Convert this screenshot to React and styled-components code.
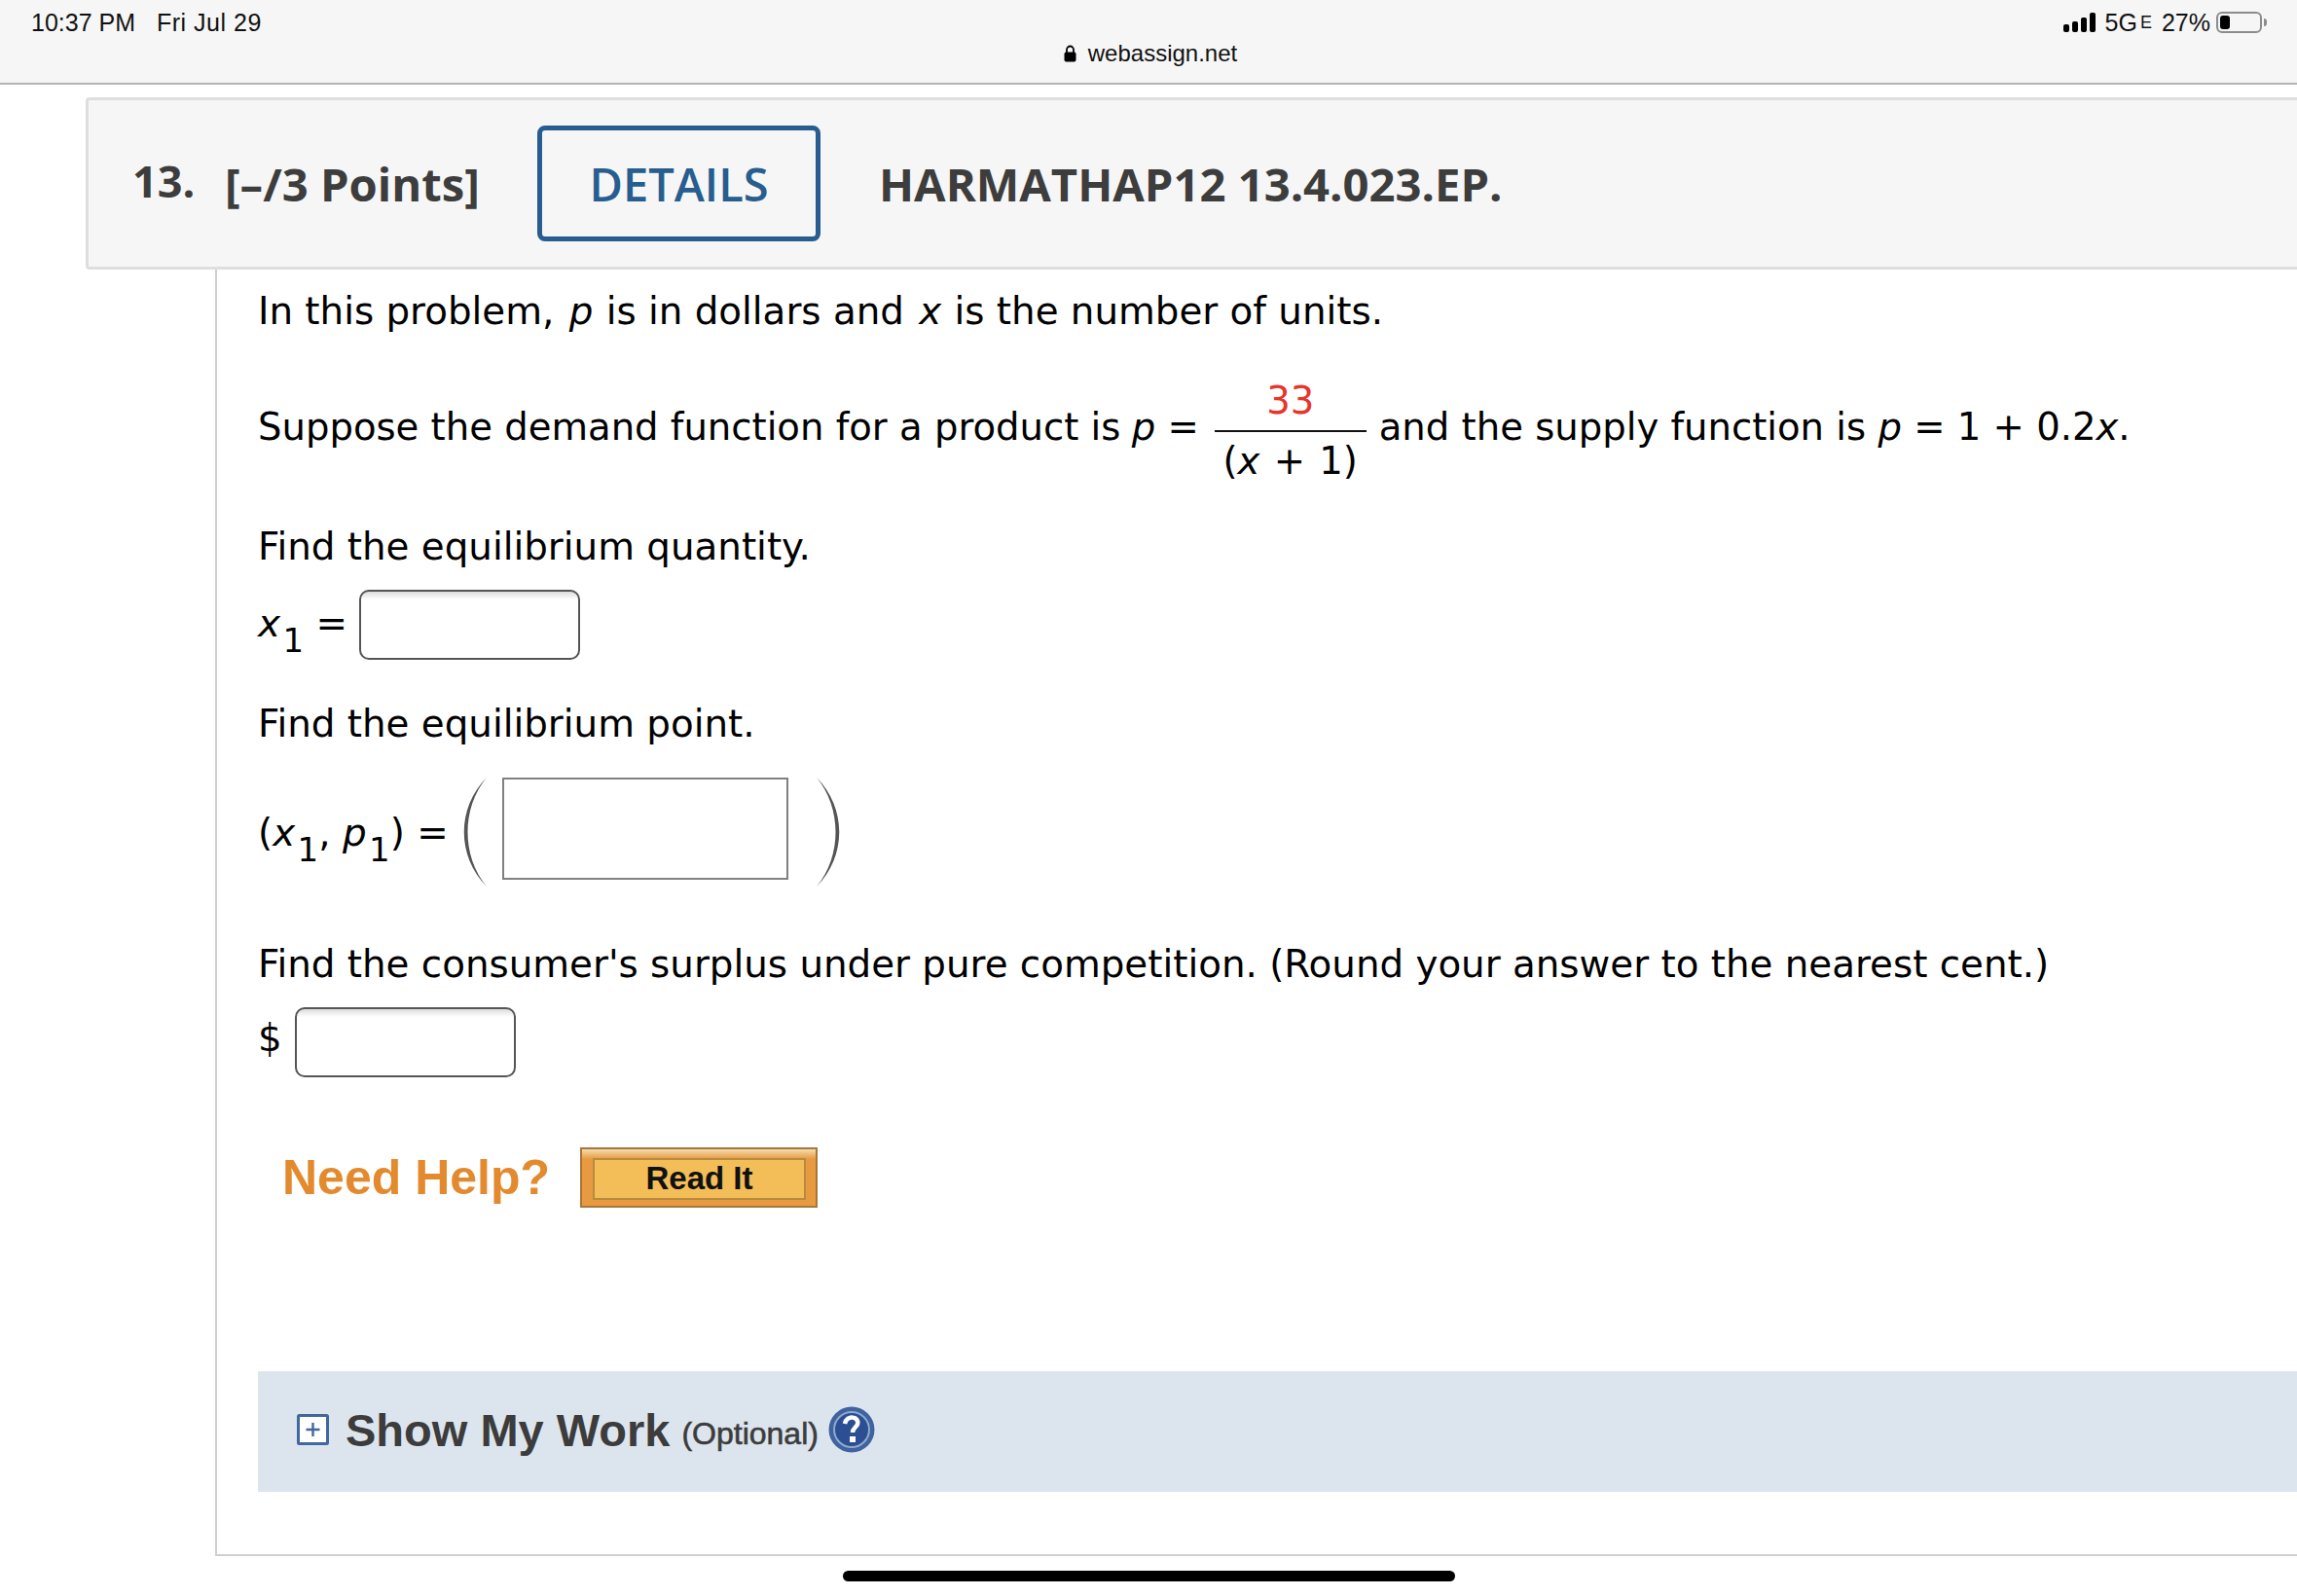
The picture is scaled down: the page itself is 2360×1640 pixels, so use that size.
import React from "react";
import styled, { createGlobalStyle } from "styled-components";

const Global = createGlobalStyle`
  html, body { margin: 0; padding: 0; background: #fff; }
  body { width: 2360px; height: 1640px; overflow: hidden; }
`;
const Page = styled.div`width:2360px;height:1640px;display:flex;flex-direction:column;overflow:hidden;background:#fff;color:#000;font-family:"DejaVu Sans",Verdana,sans-serif;`;
const StatusBar = styled.header`height:87px;box-sizing:border-box;flex:none;background:#f6f6f6;border-bottom:2px solid #b4b4b4;font-family:"Liberation Sans",Arial,sans-serif;font-size:25px;color:#111;`;
const TopRow = styled.div`height:46px;padding:0 36px 0 32px;display:flex;align-items:center;justify-content:space-between;`;
const Clock = styled.div`display:flex;gap:22px;`;
const DateText = styled.span`letter-spacing:.5px;`;
const Indicators = styled.div`display:flex;align-items:center;gap:9px;`;
const Signal = styled.div`display:flex;align-items:flex-end;gap:3px;height:20px;margin-right:1px;`;
const SignalBar = styled.span`width:6px;height:${p=>p.$h}px;background:#000;border-radius:2px;`;
const SmallE = styled.span`font-size:18px;margin-left:-6px;margin-right:1px;`;
const Battery = styled.div`position:relative;width:47px;height:22px;box-sizing:border-box;border:2px solid #8c8c8c;border-radius:6px;padding:2px;margin-left:-3px;`;
const BatteryFill = styled.div`width:10px;height:100%;background:#000;border-radius:3px;`;
const BatteryNub = styled.span`position:absolute;right:-7px;top:5px;width:3px;height:8px;background:#8c8c8c;border-radius:0 3px 3px 0;`;
const UrlRow = styled.div`display:flex;justify-content:center;align-items:center;gap:12px;height:20px;font-size:24px;margin-top:-1px;padding-left:4px;`;

const Content = styled.main`flex:1;padding:13px 0 0 88px;display:flex;flex-direction:column;`;
const QuestionHeader = styled.div`height:177px;flex:none;box-sizing:border-box;background:#f6f6f6;border:3px solid #dedede;border-right:none;border-radius:4px 0 0 4px;display:flex;align-items:center;padding-left:45px;color:#3d3d3d;font-family:"Open Sans",sans-serif;font-weight:700;`;
const Number = styled.span`font-size:45px;margin-top:-6px;width:95px;flex:none;`;
const Points = styled.span`font-size:47.2px;width:321px;flex:none;`;
const Details = styled.span`width:291px;height:119px;flex:none;box-sizing:border-box;border:5px solid #275d8f;border-radius:8px;color:#275d8f;font-weight:600;font-size:47px;display:flex;align-items:center;justify-content:center;margin-right:60px;`;
const Code = styled.span`font-size:47.2px;white-space:nowrap;`;

const Body = styled.section`margin-left:133px;height:1322px;flex:none;box-sizing:border-box;border-left:2px solid #cfcfcf;border-bottom:2px solid #cfcfcf;padding:21px 0 0 42px;font-size:38.8px;display:flex;flex-direction:column;`;
const Line = styled.div`height:44px;line-height:44px;flex:none;margin-top:${p=>p.$top||0}px;white-space:pre;`;
const I = styled.i`font-style:italic;`;
const SpacedI = styled.i`font-style:italic;margin:0 1px 0 3px;`;
const TightI = styled.i`font-style:italic;margin-left:-1px;`;
const FractionRow = styled.div`display:flex;align-items:center;height:108px;margin-top:48px;flex:none;white-space:pre;font-size:38.6px;`;
const Fraction = styled.span`display:inline-flex;flex-direction:column;align-items:center;width:156px;margin:0 13px 0 16px;`;
const Num = styled.span`color:#e8342a;line-height:44px;height:52px;`;
const Den = styled.span`border-top:2px solid #111;width:100%;text-align:center;line-height:60px;height:54px;word-spacing:2px;`;
const Tail = styled.span`display:block;margin-top:-12px;`;
const Row = styled.div`display:flex;align-items:center;flex:none;height:${p=>p.$h}px;margin-top:${p=>p.$top}px;white-space:pre;`;
const Label = styled.span`width:${p=>p.$w}px;flex:none;margin-top:${p=>p.$shift}px;`;
const Sub = styled.sub`font-size:34px;line-height:0;vertical-align:-16px;margin-left:2.5px;`;
const RoundInput = styled.div`width:227px;height:${p=>p.$h}px;box-sizing:border-box;border:2px solid #555;border-radius:10px;background:linear-gradient(#dcdcdc 0,#fff 8px);`;
const SquareInput = styled.div`width:294px;height:105px;box-sizing:border-box;border:2px solid #808080;background:#fff;margin:0 26px 0 11px;`;
const Paren = styled.svg`width:${p=>p.$w}px;height:114px;flex:none;margin-top:8px;`;
const HelpRow = styled.div`display:flex;align-items:center;height:62px;margin-top:72px;flex:none;padding-left:25px;font-family:"Liberation Sans",Arial,sans-serif;font-weight:700;`;
const NeedHelp = styled.span`color:#e38a2e;font-size:50px;width:306px;flex:none;`;
const ReadIt = styled.div`width:244px;height:62px;box-sizing:border-box;border:2px solid #a8763a;background:linear-gradient(#f4dcb0 0,#e89a40 10px);padding:9px 10px 6px 11px;display:flex;`;
const ReadItInner = styled.div`flex:1;border:2px solid #b78a3f;background:#f3bd58;color:#111;font-size:33px;line-height:1;padding-bottom:2px;display:flex;align-items:center;justify-content:center;`;
const WorkBar = styled.div`height:124px;box-sizing:border-box;padding:0 0 4px 40px;margin-top:168px;flex:none;background:#dce5ee;display:flex;align-items:center;color:#3c3c3c;font-family:"Liberation Sans",Arial,sans-serif;font-weight:700;`;
const WorkTitle = styled.span`font-size:47px;margin:0 12px 0 17px;`;
const Optional = styled.span`font-size:32px;margin:8px 10px 0 0;font-weight:400;-webkit-text-stroke:.6px #3c3c3c;`;
const Home = styled.div`position:absolute;left:866px;top:1614px;width:629px;height:11px;border-radius:6px;background:#000;`;

const Lock = () => (<svg width="13" height="18" viewBox="0 0 13 18"><path d="M3 8V5a3.5 3.5 0 0 1 7 0v3" fill="none" stroke="#000" strokeWidth="1.8"/><rect x="0.5" y="7.5" width="12" height="10" rx="2" fill="#000"/></svg>);
const Plus = () => (<svg width="33" height="32" viewBox="0 0 33 32"><rect x="1.5" y="1.5" width="30" height="29" rx="1" fill="#fff" stroke="#40689e" strokeWidth="3"/><path d="M16.5 9v14M9.5 16h14" stroke="#40689e" strokeWidth="2.4"/></svg>);
const Help = () => (<svg width="48" height="48" viewBox="0 0 48 48"><circle cx="24" cy="24" r="23.5" fill="#3f639f"/><circle cx="24" cy="24" r="18" fill="#2c4f93" stroke="#8fa9d0" strokeWidth="2"/><path d="M17 18c1-5 5-7 8-6.5 4 .5 6 3.5 5 7-1 3-5 4-5 8.5" fill="none" stroke="#fff" strokeWidth="4.5"/><rect x="22" y="31" width="6" height="6" fill="#fff"/></svg>);
const LeftParen = () => (<Paren $w={35} viewBox="0 0 35 114"><path d="M30 1C-1 32 -1 82 30 113C4 82 4 32 30 1Z" fill="#555"/></Paren>);
const RightParen = () => (<Paren $w={29} viewBox="0 0 29 114"><path d="M3 1C34 32 34 82 3 113C29 82 29 32 3 1Z" fill="#555"/></Paren>);

export default function App() {
  return (
    <Page>
      <Global />
      <StatusBar>
        <TopRow>
          <Clock><span>10:37 PM</span><DateText>Fri Jul 29</DateText></Clock>
          <Indicators>
            <Signal>
              <SignalBar $h={8}/><SignalBar $h={11}/><SignalBar $h={15}/><SignalBar $h={20}/>
            </Signal>
            <span>5G</span><SmallE>E</SmallE><span>27%</span>
            <Battery><BatteryFill/><BatteryNub/></Battery>
          </Indicators>
        </TopRow>
        <UrlRow><Lock/><span>webassign.net</span></UrlRow>
      </StatusBar>
      <Content>
        <QuestionHeader>
          <Number>13.</Number>
          <Points>[–/3 Points]</Points>
          <Details>DETAILS</Details>
          <Code>HARMATHAP12 13.4.023.EP.</Code>
        </QuestionHeader>
        <Body>
          <Line>In this problem, <SpacedI>p</SpacedI> is in dollars and <SpacedI>x</SpacedI> is the number of units.</Line>
          <FractionRow>
            <Tail>Suppose the demand function for a product is <TightI>p</TightI> =</Tail>
            <Fraction><Num>33</Num><Den>(<I>x</I> + 1)</Den></Fraction>
            <Tail>and the supply function is <I>p</I> = 1 + 0.2<I>x</I>.</Tail>
          </FractionRow>
          <Line $top={42}>Find the equilibrium quantity.</Line>
          <Row $h={72} $top={22}><Label $w={104} $shift={-4}><I>x</I><Sub>1</Sub> =</Label><RoundInput $h={72}/></Row>
          <Line $top={44}>Find the equilibrium point.</Line>
          <Row $h={114} $top={28}>
            <Label $w={205} $shift={9}>(<I>x</I><Sub>1</Sub>, <I>p</I><Sub>1</Sub>) =</Label>
            <LeftParen/><SquareInput/><RightParen/>
          </Row>
          <Line $top={61}>Find the consumer's surplus under pure competition. (Round your answer to the nearest cent.)</Line>
          <Row $h={72} $top={22}><Label $w={38} $shift={-9}>$</Label><RoundInput $h={72}/></Row>
          <HelpRow><NeedHelp>Need Help?</NeedHelp><ReadIt><ReadItInner>Read It</ReadItInner></ReadIt></HelpRow>
          <WorkBar><Plus/><WorkTitle>Show My Work</WorkTitle><Optional>(Optional)</Optional><Help/></WorkBar>
        </Body>
      </Content>
      <Home/>
    </Page>
  );
}
